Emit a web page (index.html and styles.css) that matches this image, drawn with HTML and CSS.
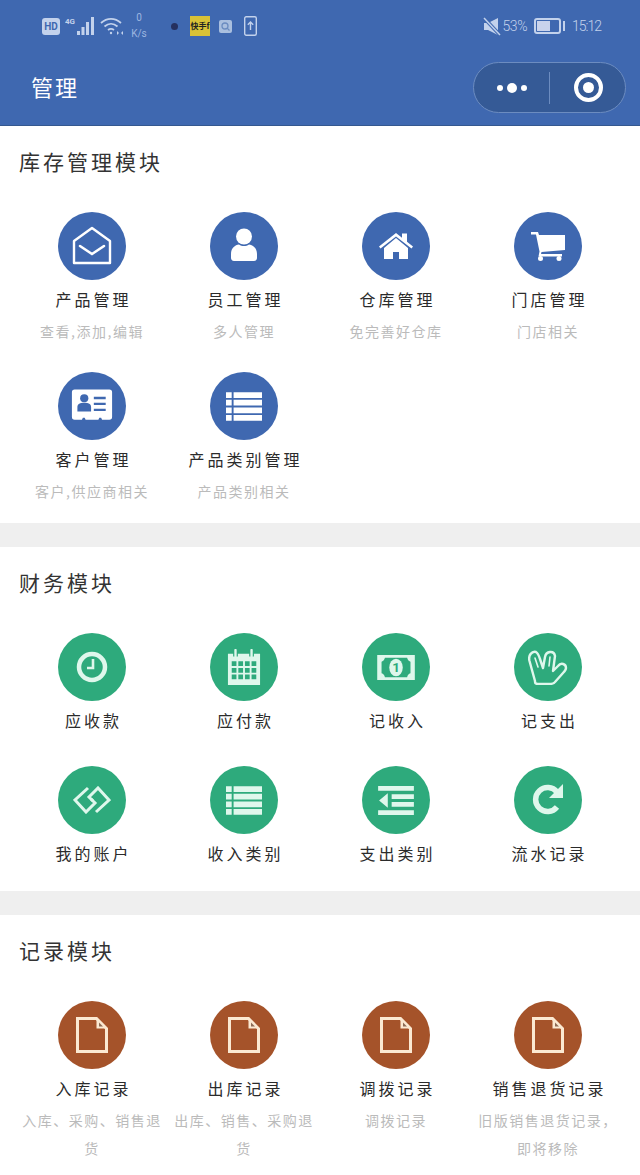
FILE: index.html
```html
<!doctype html>
<html lang="zh-CN">
    <head>
        <meta charset="utf-8">
        <meta name="viewport" content="width=device-width, initial-scale=1.0">
        <title>管理</title>
        <link rel="stylesheet" href="styles.css">
    </head>
    <body>
        <header class="top">
            <div class="status">
                <div class="status-left">
                    <span class="hd">HD</span>
                    <svg class="signal" width="30" height="20" viewBox="0 0 30 20" fill="#c3d2ec"><text x="0" y="8" font-size="8" font-weight="700" font-family="Roboto, sans-serif">4G</text><rect x="12" y="15" width="3" height="4"/><rect x="16.500" y="11" width="3" height="8"/><rect x="21" y="6" width="3" height="13"/><rect x="26" y="1" width="3" height="18"/></svg>
                    <svg class="wifi" width="24" height="20" viewBox="0 0 24 20" fill="none" stroke="#c3d2ec" stroke-width="1.800"><path d="M1 7c6-5.500 14-5.500 20 0M4.500 10.500c4-3.500 9-3.500 13 0M8 14c2-1.500 4-1.500 6 0"/><circle cx="11" cy="17" r="1.200" fill="#c3d2ec" stroke="none"/><path d="M17 15l2 2-2 2zM23 15l-2 2 2 2z" fill="#c3d2ec" stroke="none"/></svg>
                    <span class="speed">0<br>K/s</span>
                    <span class="dot-app"></span>
                    <span class="yellow-app">快手f</span>
                    <svg class="small-app" width="13" height="13" viewBox="0 0 13 13"><rect width="13" height="13" rx="2" fill="#a9bfdf"/><circle cx="6" cy="6" r="3" fill="none" stroke="#6b8cc0" stroke-width="1.300"/><path d="M8 8l2.500 2.500" stroke="#6b8cc0" stroke-width="1.300"/></svg>
                    <svg class="upload" width="13" height="20" viewBox="0 0 13 20" fill="none" stroke="#c3d2ec" stroke-width="1.400"><rect x=".7" y=".7" width="11.600" height="18.600" rx="1.500"/><path d="M6.500 14V6M3.800 8.700l2.700-2.700 2.700 2.700"/></svg>
                </div>
                <div class="status-right">
                    <svg class="mute" width="18" height="19" viewBox="0 0 18 19" fill="#c3d2ec"><path d="M1 6h4l10-5v17L5 13H1z"/><path d="M1 1l16 17" stroke="#3f68b0" stroke-width="3.500"/><path d="M1 1l16 17" stroke="#c3d2ec" stroke-width="1.500"/></svg>
                    <span class="percent">53%</span>
                    <span class="battery"><span class="battery-level"></span></span>
                    <span class="clock">15:12</span>
                </div>
            </div>
            <div class="nav">
                <h1>管理</h1>
                <div class="capsule">
                    <div class="capsule-more"><i></i><b></b><i></i></div>
                    <div class="capsule-close"></div>
                </div>
            </div>
        </header>

        <main>
            <section class="module">
                <h2>库存管理模块</h2>
                <div class="grid">
                    <a class="item">
                        <span class="icon blue">
                            <svg width="42" height="42" viewBox="0 0 42 42" fill="none" stroke="#fff" stroke-width="2.400"><path d="M3 16L21 3l18 13v22H3z" stroke-linejoin="round"/><path d="M9 21l12 8 12-8" stroke-linecap="round" stroke-width="2.600"/></svg>
                        </span>
                        <strong>产品管理</strong>
                        <small>查看,添加,编辑</small>
                    </a>
                    <a class="item">
                        <span class="icon blue">
                            <svg width="42" height="42" viewBox="0 0 42 42" fill="#fff"><circle cx="21" cy="11.500" r="8"/><path d="M8 29c0-6 4-9 8-9.500 3 2 7 2 10 0 4 .5 8 3.500 8 9.500v4c0 1.500-1 3-3 3H11c-2 0-3-1.500-3-3z"/></svg>
                        </span>
                        <strong>员工管理</strong>
                        <small>多人管理</small>
                    </a>
                    <a class="item">
                        <span class="icon blue">
                            <svg width="34" height="26" viewBox="0 0 34 26" fill="#fff"><path d="M0 13.500L17 0l6 4.800V.5h5v8.300l6 4.700-1.500 2L17 3.500 1.500 15.500z"/><path d="M5 15L17 5l12 10v11h-9v-7h-6v7H5z"/></svg>
                        </span>
                        <strong>仓库管理</strong>
                        <small>免完善好仓库</small>
                    </a>
                    <a class="item">
                        <span class="icon blue">
                            <svg width="34" height="29" viewBox="0 0 34 29" fill="#fff"><path d="M0 0h7l1 3h26v15l-23.500 2-.5 2h21v2.500H7.500l1-5L5 2.500H0z"/><circle cx="9.500" cy="26.500" r="2.500"/><circle cx="28" cy="26.500" r="2.500"/></svg>
                        </span>
                        <strong>门店管理</strong>
                        <small>门店相关</small>
                    </a>
                    <a class="item">
                        <span class="icon blue">
                            <svg width="42" height="42" viewBox="0 0 46 46"><path d="M4 5h38a3 3 0 0 1 3 3v27a3 3 0 0 1-3 3h-8l-1-2h-2l-1 2H16l-1-2h-2l-1 2H4a3 3 0 0 1-3-3V8a3 3 0 0 1 3-3z" fill="#fff"/><circle cx="14.500" cy="14.500" r="4.500" fill="#3f68b0"/><path d="M7 29v-5c0-3 3-4.500 7.500-4.500S22 21 22 24v5z" fill="#3f68b0"/><path d="M25 13h13v2.500H25zM25 19.500h13V22H25zM25 26h13v2.500H25z" fill="#3f68b0"/></svg>
                        </span>
                        <strong>客户管理</strong>
                        <small>客户,供应商相关</small>
                    </a>
                    <a class="item">
                        <span class="icon blue">
                            <svg width="36" height="29" viewBox="0 0 38 30" fill="#fff"><path d="M0 0h6v6H0zM8 0h30v6H8zM0 8h6v6H0zM8 8h30v6H8zM0 16h6v6H0zM8 16h30v6H8zM0 24h6v6H0zM8 24h30v6H8z"/></svg>
                        </span>
                        <strong>产品类别管理</strong>
                        <small>产品类别相关</small>
                    </a>
                </div>
            </section>

            <section class="module module-plain">
                <h2>财务模块</h2>
                <div class="grid">
                    <a class="item">
                        <span class="icon green">
                            <svg width="34" height="34" viewBox="0 0 34 34" fill="none" stroke="#dff7ec"><circle cx="17" cy="17" r="13" stroke-width="4.500"/><path d="M18 9v9h-6" stroke-width="2.600"/></svg>
                        </span>
                        <strong>应收款</strong>
                    </a>
                    <a class="item">
                        <span class="icon green">
                            <svg width="34" height="36" viewBox="0 0 36 38"><path d="M1 5h34v33H1z" fill="#dff7ec"/><path d="M9 1v7M26 1v7" stroke="#2eaa7c" stroke-width="5"/><path d="M9 1v7M26 1v7" stroke="#dff7ec" stroke-width="2.500" stroke-linecap="round"/><path fill="#2eaa7c" d="M5 13h5v5H5zM12 13h5v5h-5zM19 13h5v5h-5zM26 13h5v5h-5zM5 20h5v5H5zM12 20h5v5h-5zM19 20h5v5h-5zM26 20h5v5h-5zM5 27h5v5H5zM12 27h5v5h-5zM19 27h5v5h-5zM26 27h5v5h-5z"/></svg>
                        </span>
                        <strong>应付款</strong>
                    </a>
                    <a class="item">
                        <span class="icon green">
                            <svg width="39" height="27" viewBox="0 0 40 28"><path d="M0 1h39v26H0z" fill="#dff7ec"/><path d="M8 4h23c.5 2 1.500 3.500 3.500 4v12c-2 .5-3 2-3.500 4H8c-.5-2-1.500-3.500-3.500-4V8C6.500 7.500 7.500 6 8 4z" fill="#2eaa7c"/><ellipse cx="19.500" cy="14" rx="7" ry="9" fill="#dff7ec"/><text class="bill" x="19.500" y="19" text-anchor="middle">1</text></svg>
                        </span>
                        <strong>记收入</strong>
                    </a>
                    <a class="item">
                        <span class="icon green">
                            <svg width="40" height="36" viewBox="0 0 40 36" fill="none" stroke="#dff7ec" stroke-width="2.400" stroke-linejoin="round" stroke-linecap="round"><path d="M7 32L1.500 12C0 6 4 2 8 3c2 1 3 4 4 7l3 9 2-11c1-6 9-7 10-1l-2 15 5-5c3-4 8-2 8 2 0 2-2 4-3 5l-8 9c-1 2-4 2-6 2H10c-2 0-3-1-3-2z"/><path d="M7 9l3 9M22 8l-1 9" stroke-width="1.600"/></svg>
                        </span>
                        <strong>记支出</strong>
                    </a>
                    <a class="item">
                        <span class="icon green">
                            <svg width="38" height="28" viewBox="0 0 38 28" fill="none" stroke="#dff7ec" stroke-width="3"><path d="M15 2L2 14l11 12 9-9-4-4"/><path d="M23 26l13-12L25 2l-9 9 4 4"/></svg>
                        </span>
                        <strong>我的账户</strong>
                    </a>
                    <a class="item">
                        <span class="icon green">
                            <svg width="36" height="29" viewBox="0 0 38 30" fill="#dff7ec"><path d="M0 0h6v6H0zM8 0h30v6H8zM0 8h6v6H0zM8 8h30v6H8zM0 16h6v6H0zM8 16h30v6H8zM0 24h6v6H0zM8 24h30v6H8z"/></svg>
                        </span>
                        <strong>收入类别</strong>
                    </a>
                    <a class="item">
                        <span class="icon green">
                            <svg width="36" height="29" viewBox="0 0 37 30" fill="#dff7ec"><path d="M0 0h37v5H0zM0 25h37v5H0zM14 8.500h23v5H14zM14 16.500h23v5H14zM10 7.500v15L1 15z"/></svg>
                        </span>
                        <strong>支出类别</strong>
                    </a>
                    <a class="item">
                        <span class="icon green">
                            <svg width="34" height="34" viewBox="0 0 34 34" fill="none"><path d="M26 24a12 12 0 1 1 0-15" stroke="#dff7ec" stroke-width="5.500"/><path d="M32 1v14H18z" fill="#dff7ec"/></svg>
                        </span>
                        <strong>流水记录</strong>
                    </a>
                </div>
            </section>

            <section class="module module-last">
                <h2>记录模块</h2>
                <div class="grid">
                    <a class="item">
                        <span class="icon brown">
                            <svg width="32" height="36" viewBox="0 0 32 36"><use href="#doc"/></svg>
                        </span>
                        <strong>入库记录</strong>
                        <small>入库、采购、销售退货</small>
                    </a>
                    <a class="item">
                        <span class="icon brown">
                            <svg width="32" height="36" viewBox="0 0 32 36"><use href="#doc"/></svg>
                        </span>
                        <strong>出库记录</strong>
                        <small>出库、销售、采购退货</small>
                    </a>
                    <a class="item">
                        <span class="icon brown">
                            <svg width="32" height="36" viewBox="0 0 32 36"><use href="#doc"/></svg>
                        </span>
                        <strong>调拨记录</strong>
                        <small>调拨记录</small>
                    </a>
                    <a class="item">
                        <span class="icon brown">
                            <svg width="32" height="36" viewBox="0 0 32 36"><use href="#doc"/></svg>
                        </span>
                        <strong>销售退货记录</strong>
                        <small>旧版销售退货记录，即将移除</small>
                    </a>
                </div>
            </section>
        </main>

        <!-- shared page glyph for the record module -->
        <svg class="defs" width="0" height="0">
            <symbol id="doc" viewBox="0 0 32 36">
                <path d="M1.500 1.500h19l10 10v23h-29z" fill="none" stroke="#fbe9d2" stroke-width="3"/>
                <path d="M20.500 1.500v10h10z" fill="#fbe9d2"/>
                <path d="M23 5.500v4h4z" fill="#8c6b55"/>
            </symbol>
        </svg>
    </body>
</html>
```

FILE: styles.css
```css
* {
    padding: 0;
    margin: 0;
    box-sizing: border-box;
}

body {
    background: #fff;
    font-family: "Noto Sans CJK SC", "Noto Sans", sans-serif;
    color: #2b2b2b;
}

.top {
    height: 126px;
    background: #3f68b0;
    border-bottom: 1px solid #35588f;
    padding: 10px 14px 0 31px;
}

.status {
    display: flex;
    justify-content: space-between;
    align-items: center;
    height: 32px;
    padding: 0 25px 0 11px;
}

.status-left,
.status-right {
    display: flex;
    align-items: center;
    color: #c3d2ec;
}

.status-right {
    font-family: Roboto, sans-serif;
    font-weight: 300;
    font-size: 14px;
}

.hd {
    width: 18px;
    height: 17px;
    border-radius: 3px;
    background: #c3d2ec;
    color: #3f68b0;
    font: 700 10px/17px Roboto, sans-serif;
    text-align: center;
    margin-right: 5px;
}

.signal {
    margin-right: 5px;
}

.speed {
    width: 24px;
    margin: 0 0 0 3px;
    color: #9db6e0;
    font: 10px/16px Roboto, sans-serif;
    text-align: center;
}

.dot-app {
    width: 7px;
    height: 7px;
    border-radius: 50%;
    background: #25305f;
    margin-left: 20px;
}

.yellow-app {
    width: 20px;
    height: 20px;
    background: #d8c237;
    color: #222;
    font-size: 8px;
    font-weight: 700;
    line-height: 20px;
    text-align: center;
    white-space: nowrap;
    overflow: hidden;
    margin-left: 12px;
}

.small-app {
    margin-left: 9px;
}

.upload {
    margin-left: 12px;
}

.percent {
    margin-left: 2px;
    letter-spacing: -0.500px;
}

.clock {
    letter-spacing: -1px;
    margin-left: 11px;
}

.battery {
    display: inline-block;
    width: 27px;
    height: 16px;
    border: 2px solid #c3d2ec;
    border-radius: 3px;
    padding: 1px;
    position: relative;
    margin-left: 7px;
}

.battery::after {
    content: "";
    position: absolute;
    right: -6px;
    top: 1px;
    width: 2px;
    height: 10px;
    background: #c3d2ec;
}

.battery-level {
    display: block;
    width: 60%;
    height: 100%;
    background: #c9d3ec;
}

.nav {
    display: flex;
    justify-content: space-between;
    align-items: center;
    margin-top: 20px;
}

.nav h1 {
    color: #fff;
    font-size: 22px;
    font-weight: 400;
    letter-spacing: 2px;
    margin-bottom: 4px;
}

.capsule {
    display: flex;
    align-items: center;
    width: 153px;
    height: 51px;
    border-radius: 26px;
    background: #355a96;
    border: 1px solid #6c8cc0;
}

.capsule-more {
    width: 76px;
    height: 32px;
    border-right: 1px solid #6c8cc0;
    display: flex;
    align-items: center;
    justify-content: center;
    gap: 4px;
}

.capsule-more i,
.capsule-more b {
    display: block;
    width: 6px;
    height: 6px;
    border-radius: 50%;
    background: #fff;
}

.capsule-more b {
    width: 10px;
    height: 10px;
}

.capsule-close {
    width: 29px;
    height: 29px;
    border: 4px solid #fff;
    border-radius: 50%;
    margin-left: 24px;
    display: flex;
    align-items: center;
    justify-content: center;
}

.capsule-close::before {
    content: "";
    width: 11px;
    height: 11px;
    border-radius: 50%;
    background: #fff;
}

.module {
    padding: 20px 16px 18px;
    border-bottom: 24px solid #efefef;
}

.module-plain {
    padding-bottom: 20px;
}

.module-last {
    padding-bottom: 0;
    border-bottom: 0;
}

.module h2 {
    font-size: 21px;
    font-weight: 400;
    line-height: 30px;
    letter-spacing: 3px;
    margin: 0 0 36px 3px;
    color: #333;
}

.grid {
    display: grid;
    grid-template-columns: repeat(4, 152px);
    row-gap: 27px;
}

.module-plain .grid {
    row-gap: 28px;
}

.item {
    display: flex;
    flex-direction: column;
    align-items: center;
    text-align: center;
}

.icon {
    width: 68px;
    height: 68px;
    border-radius: 50%;
    display: flex;
    align-items: center;
    justify-content: center;
}

.blue {
    background: #3f68b0;
}

.green {
    background: #2eaa7c;
}

.brown {
    background: #a5532a;
}

.item strong {
    font-size: 16px;
    font-weight: 400;
    line-height: 26px;
    letter-spacing: 3px;
    padding-left: 3px;
    margin: 6px 0 5px;
    white-space: nowrap;
}

.item small {
    font-size: 14px;
    line-height: 28px;
    letter-spacing: 1.500px;
    color: #bbb;
}

.bill {
    font: 700 14px Roboto, sans-serif;
    fill: #2eaa7c;
}

.defs {
    position: absolute;
}
```
